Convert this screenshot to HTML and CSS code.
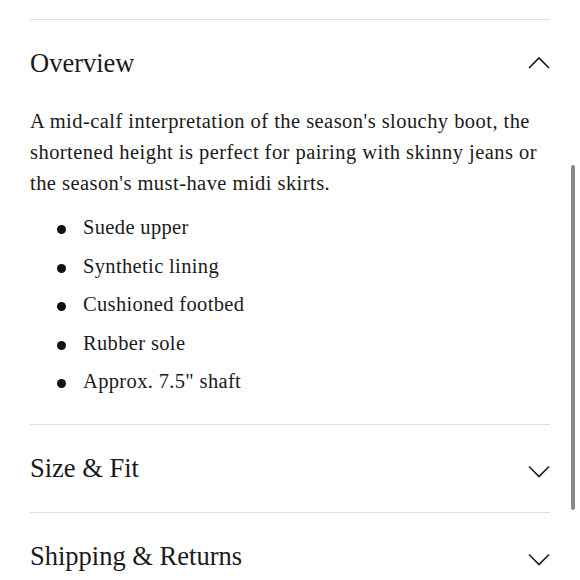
FILE: index.html
```html
<!DOCTYPE html>
<html lang="en">
<head>
<meta charset="utf-8">
<title>Product details</title>
<link rel="stylesheet" href="styles.css">
</head>
<body>
<div class="page">
  <section class="accordion">
    <div class="item open">
      <div class="item-header">
        <span class="item-title">Overview</span>
        <svg class="chevron" width="22" height="22" viewBox="0 0 22 22"><path d="M1 16 L11 6 L21 16" /></svg>
      </div>
      <div class="panel">
        <p class="desc">A mid-calf interpretation of the season's slouchy boot, the shortened height is perfect for pairing with skinny jeans or the season's must-have midi skirts.</p>
        <ul class="features">
          <li>Suede upper</li>
          <li>Synthetic lining</li>
          <li>Cushioned footbed</li>
          <li>Rubber sole</li>
          <li>Approx. 7.5" shaft</li>
        </ul>
      </div>
    </div>
    <div class="item">
      <div class="item-header">
        <span class="item-title">Size &amp; Fit</span>
        <svg class="chevron" width="22" height="22" viewBox="0 0 22 22"><path d="M1 9.5 L11 19.5 L21 9.5" /></svg>
      </div>
    </div>
    <div class="item">
      <div class="item-header">
        <span class="item-title">Shipping &amp; Returns</span>
        <svg class="chevron" width="22" height="22" viewBox="0 0 22 22"><path d="M1 9.5 L11 19.5 L21 9.5" /></svg>
      </div>
    </div>
  </section>
  <div class="scroll-thumb"></div>
</div>
</body>
</html>
```

FILE: styles.css
```css
html, body {
  margin: 0;
  padding: 0;
  overflow: hidden;
  background: #ffffff;
}

.page {
  height: 580px;
  overflow: hidden;
  padding: 19px 30px 0;
  box-sizing: border-box;
  font-family: "Liberation Serif", "Times New Roman", serif;
  color: #1a1a1a;
}

.item {
  border-top: 1px solid #dedede;
}

.item-header {
  display: flex;
  justify-content: space-between;
  align-items: center;
  padding: 27px 0 28px;
}

.item-title {
  font-size: 26.5px;
  line-height: 32px;
  color: #1a1a1a;
}

.chevron {
  display: block;
  flex: none;
}

.chevron path {
  fill: none;
  stroke: #1a1a1a;
  stroke-width: 1.6;
}

.panel {
  padding-bottom: 23px;
  margin-top: -1px;
}

.desc {
  margin: 0;
  font-size: 20.5px;
  letter-spacing: 0.45px;
  line-height: 31px;
}

.features {
  list-style: none;
  margin: 9px 0 0;
  padding: 0 0 0 27px;
}

.features li {
  display: flex;
  align-items: baseline;
  font-size: 20.5px;
  letter-spacing: 0.35px;
  line-height: 38.5px;
}

.features li::before {
  content: "";
  display: inline-block;
  flex: none;
  width: 9px;
  height: 9px;
  border-radius: 50%;
  background: #111111;
  margin: 0 17px 3px 0;
}

.scroll-thumb {
  position: fixed;
  top: 165px;
  left: 571px;
  width: 4px;
  height: 345px;
  border-radius: 2px;
  background: #8a8a8a;
}
```
